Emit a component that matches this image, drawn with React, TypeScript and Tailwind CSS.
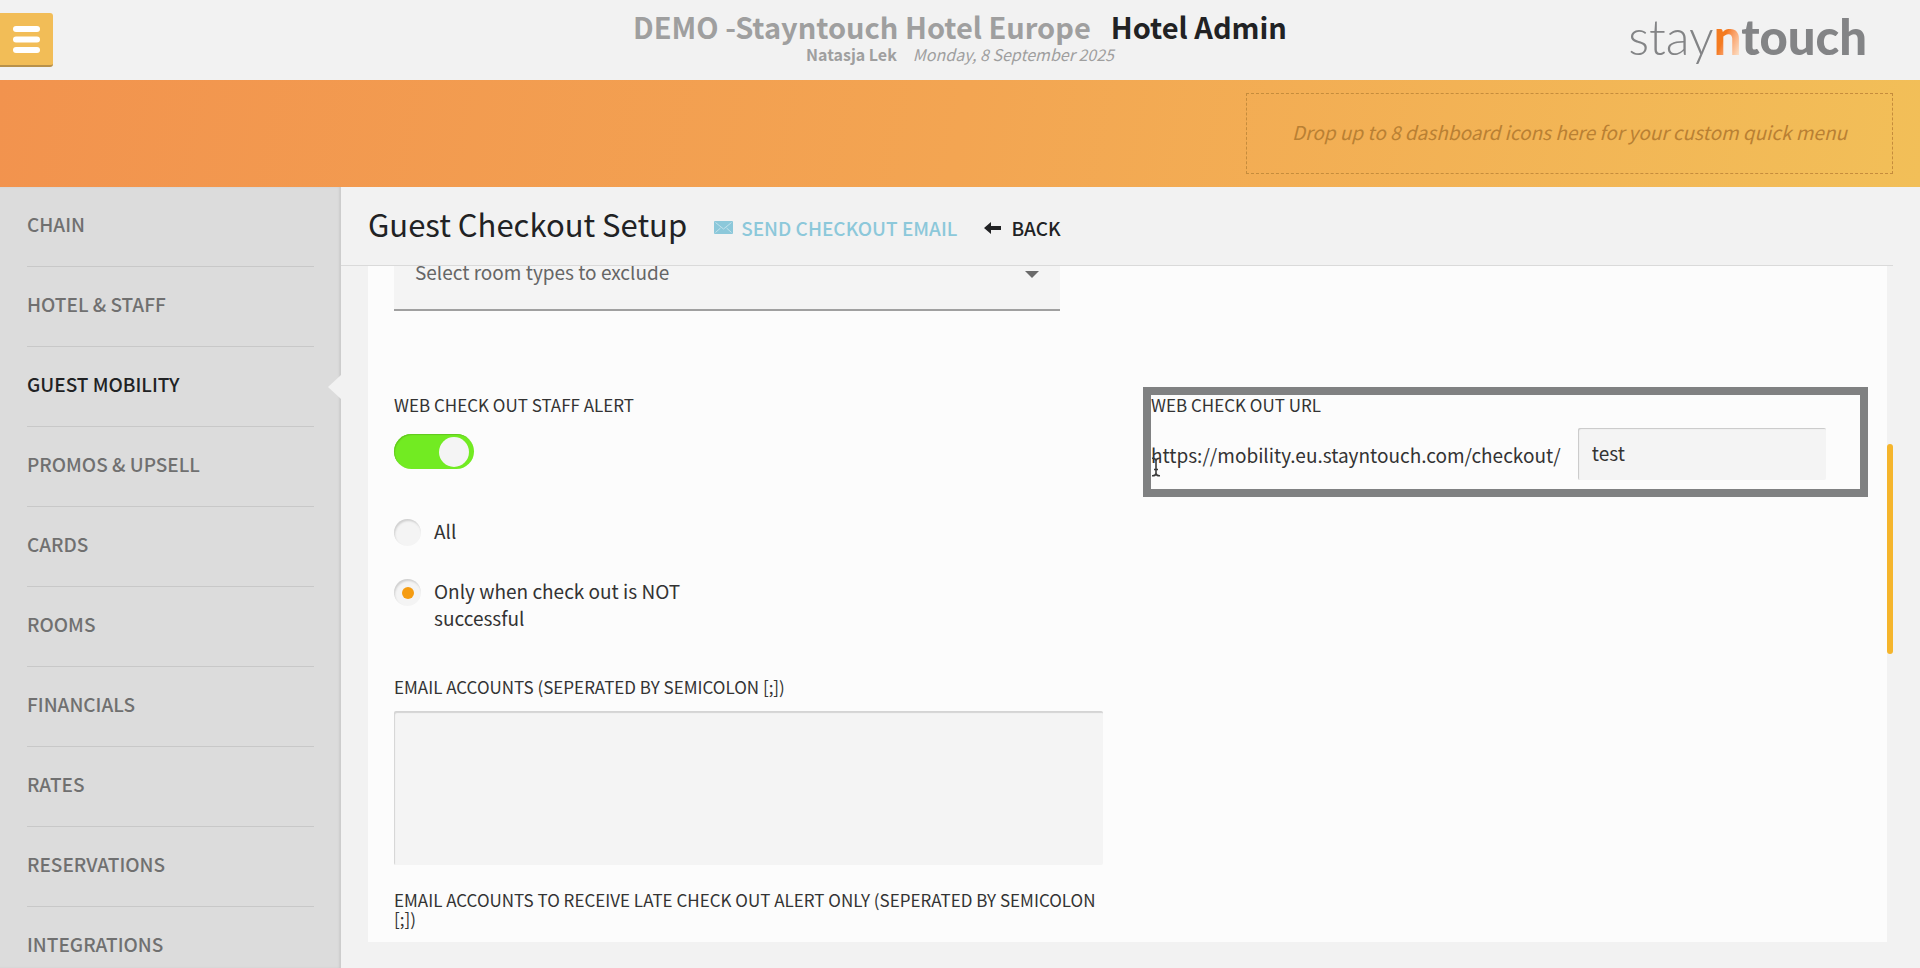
import React, { useState } from "react";

const MENU = [
  "CHAIN",
  "HOTEL & STAFF",
  "GUEST MOBILITY",
  "PROMOS & UPSELL",
  "CARDS",
  "ROOMS",
  "FINANCIALS",
  "RATES",
  "RESERVATIONS",
  "INTEGRATIONS",
];

const ALERT_OPTIONS = [
  { id: "all", text: "All" },
  { id: "failed", text: "Only when check out is NOT successful" },
];

function Header() {
  return (
    <header className="relative flex h-20 shrink-0 items-start justify-center">
      <button
        type="button"
        aria-label="Open menu"
        className="absolute left-0 top-[13px] flex h-[54px] w-[53px] items-center justify-center rounded-r-[3px] border-b-2 border-[#b8914a] bg-[#f2bd57]"
      >
        <svg width="27" height="27" viewBox="0 0 27 27" fill="#ffffff" aria-hidden="true">
          <rect x="0" y="0" width="27" height="6" rx="3" />
          <rect x="0" y="10.500" width="27" height="6" rx="3" />
          <rect x="0" y="21" width="27" height="6" rx="3" />
        </svg>
      </button>
      <div className="flex flex-col items-center pt-[7px] text-[#9f9f9f]">
        <h1 className="flex gap-5 text-[29px] font-bold leading-[38px]">
          <span>DEMO -Stayntouch Hotel Europe</span>
          <span className="text-[#212224]">Hotel Admin</span>
        </h1>
        <p className="flex gap-4 text-base leading-[18px]">
          <span className="font-bold">Natasja Lek</span>
          <span className="italic">Monday, 8 September 2025</span>
        </p>
      </div>
      <div
        className="absolute right-[53px] top-2 font-[Lato,sans-serif] text-[49px] leading-[56px] text-[#838486]"
        aria-label="stayntouch"
      >
        <span className="font-light">stay</span>
        <span className="bg-linear-to-br from-[#f47b20] from-45% to-[#fbd9bd] to-85% bg-clip-text font-black text-transparent">n</span>
        <span className="font-black">touch</span>
      </div>
    </header>
  );
}

function QuickMenu() {
  return (
    <section className="flex h-[107px] shrink-0 justify-end bg-linear-[100deg,#f2934e,#f3a552_50%,#f2bf58] px-[27px] py-[13px]">
      <div className="flex w-[647px] items-center justify-center border border-dashed border-[#c58c3c] pb-[2px] text-[19px] italic text-[#b98033]">
        Drop up to 8 dashboard icons here for your custom quick menu
      </div>
    </section>
  );
}

function Sidebar() {
  return (
    <nav className="w-[341px] shrink-0 overflow-hidden bg-[#dcdcdc] shadow-[inset_-2px_0_2px_#cccccc]">
      <ul>
        {MENU.map((item) => {
          const active = item === "GUEST MOBILITY";
          return (
            <li key={item} className="relative px-[27px]">
              <a
                href="#"
                className={
                  "flex h-20 items-center border-b border-[#c8c8c8] pb-1 text-[19px] font-medium " +
                  (active ? "text-[#212224]" : "text-[#707070]")
                }
              >
                {item}
              </a>
              {active && (
                <svg className="absolute right-0 top-7" width="13" height="24" viewBox="0 0 13 24" aria-hidden="true">
                  <path d="M13 0 0 12l13 12z" fill="#f2f2f2" />
                </svg>
              )}
            </li>
          );
        })}
      </ul>
    </nav>
  );
}

function TitleBar() {
  return (
    <div className="mr-[27px] flex h-[79px] shrink-0 items-center border-b border-[#dadada] pl-[27px]">
      <h2 className="pb-1 text-[31px] leading-[40px] text-[#212224]">Guest Checkout Setup</h2>
      <a href="#" className="ml-[27px] flex items-center gap-2 pt-[3px] text-[19px] font-medium leading-[28px] text-[#8cc8da]">
        <svg width="19" height="13" viewBox="0 0 19 13" aria-hidden="true">
          <rect width="19" height="13" rx="1" fill="#8cc8da" />
          <path d="M1.500 1.500 9.500 8 17.500 1.500M1.500 11.500l5-4.500M17.500 11.500l-5-4.500" fill="none" stroke="#c2e2ec" strokeWidth="1" />
        </svg>
        SEND CHECKOUT EMAIL
      </a>
      <a href="#" className="ml-[27px] flex items-center gap-[10px] pt-[3px] text-[19px] font-medium leading-[28px] text-[#212224]">
        <svg width="17" height="12" viewBox="0 0 17 12" aria-hidden="true">
          <path d="M0 6 7 0v4h10v4H7v4z" fill="#212224" />
        </svg>
        BACK
      </a>
    </div>
  );
}

function StaffAlerts() {
  const [enabled, setEnabled] = useState(true);
  const [mode, setMode] = useState("failed");
  return (
    <div className="flex flex-col items-start">
      <label htmlFor="staff-alert">WEB CHECK OUT STAFF ALERT</label>
      <input
        id="staff-alert"
        type="checkbox"
        checked={enabled}
        onChange={(e) => setEnabled(e.target.checked)}
        className="mt-5 flex h-[35px] w-20 appearance-none items-center rounded-full bg-[#cccccc] px-[5px] before:size-[30px] before:rounded-full before:bg-[#f4f4f4] checked:justify-end checked:bg-[#72eb22] checked:shadow-[inset_1px_1px_1px_#62c81e]"
      />
      <div className="mt-12 flex w-[290px] flex-col gap-[31px] text-[19px] leading-[27px]">
        {ALERT_OPTIONS.map((o) => (
          <label key={o.id} className="flex gap-[13px]">
            <input
              type="radio"
              name="alert-mode"
              checked={mode === o.id}
              onChange={() => setMode(o.id)}
              className="mt-[2px] flex size-[27px] shrink-0 appearance-none items-center justify-center rounded-full bg-[#f4f4f4] shadow-[inset_1px_2px_2px_#d0d0d0] checked:before:size-3 checked:before:rounded-full checked:before:bg-[#f59c12]"
            />
            <span>{o.text}</span>
          </label>
        ))}
      </div>
      <label htmlFor="alert-mails" className="mt-[46px]">
        EMAIL ACCOUNTS (SEPERATED BY SEMICOLON [;])
      </label>
      <textarea
        id="alert-mails"
        className="mt-[15px] h-[154px] w-full resize-none rounded-[2px] bg-[#f4f4f4] p-3 text-[19px] shadow-[inset_1px_2px_1px_#d4d4d4] outline-none"
      />
      <label htmlFor="late-mails" className="mt-[25px]">
        EMAIL ACCOUNTS TO RECEIVE LATE CHECK OUT ALERT ONLY (SEPERATED BY SEMICOLON [;])
      </label>
      <textarea
        id="late-mails"
        className="mt-[15px] h-[154px] w-full resize-none rounded-[2px] bg-[#f4f4f4] p-3 text-[19px] shadow-[inset_1px_2px_1px_#d4d4d4] outline-none"
      />
    </div>
  );
}

function CheckoutUrl() {
  return (
    <div className="relative self-start pb-[9px] outline-8 outline-[#808182]">
      <label htmlFor="url-slug" className="block">
        WEB CHECK OUT URL
      </label>
      <div className="mt-[14px] flex items-center gap-[17px] text-[19px] leading-[27px]">
        <span>https://mobility.eu.stayntouch.com/checkout/</span>
        <input
          id="url-slug"
          type="text"
          defaultValue="test"
          className="h-[52px] w-[248px] rounded-[2px] bg-[#f4f4f4] px-[14px] pb-1 shadow-[inset_1px_1px_1px_#c8c8c8] outline-none"
        />
      </div>
      <svg className="absolute left-0 top-[62px]" width="10" height="20" viewBox="0 0 10 20" aria-hidden="true">
        <path
          d="M1 1.200Q4.500 1 5 3.500 5.500 1 9 1.200M5 3.500v13M1 18.800q3.500.2 4-2.300.5 2.500 4 2.300M3 12.500h4"
          fill="none"
          stroke="#3a3a3a"
          strokeWidth="1.600"
        />
      </svg>
    </div>
  );
}

export default function App() {
  return (
    <div className="flex h-screen flex-col overflow-hidden bg-[#f2f2f2] font-['Noto_Sans_CJK_SC','Open_Sans',sans-serif] text-[#333333]">
      <Header />
      <QuickMenu />
      <div className="flex min-h-0 grow">
        <Sidebar />
        <main className="flex min-w-0 grow flex-col">
          <TitleBar />
          <div className="mx-[27px] mb-[26px] flex min-h-0 grow">
            <div className="min-w-0 grow overflow-hidden bg-[#fcfcfc] pl-[26px] pr-[27px] text-[17px] leading-[19px]">
              <div className="relative -mt-[35px] w-[666px] max-w-full">
                <select
                  aria-label="Room types to exclude"
                  className="block h-20 w-full appearance-none border-b-2 border-[#a0a0a0] bg-[#f4f4f4] pb-4 pl-[21px] pt-[19px] text-[19px] leading-[40px] text-[#666666] outline-none"
                >
                  <option>Select room types to exclude</option>
                </select>
                <svg className="absolute right-[21px] top-10" width="14" height="7" viewBox="0 0 14 7" aria-hidden="true">
                  <path d="M0 0h14L7 7z" fill="#6a6a6a" />
                </svg>
              </div>
              <div className="mt-[84px] grid grid-cols-2 gap-12">
                <StaffAlerts />
                <CheckoutUrl />
              </div>
            </div>
            <div className="mt-[178px] h-[210px] w-[6px] shrink-0 rounded-full bg-[#f5b52c]" />
          </div>
        </main>
      </div>
    </div>
  );
}
